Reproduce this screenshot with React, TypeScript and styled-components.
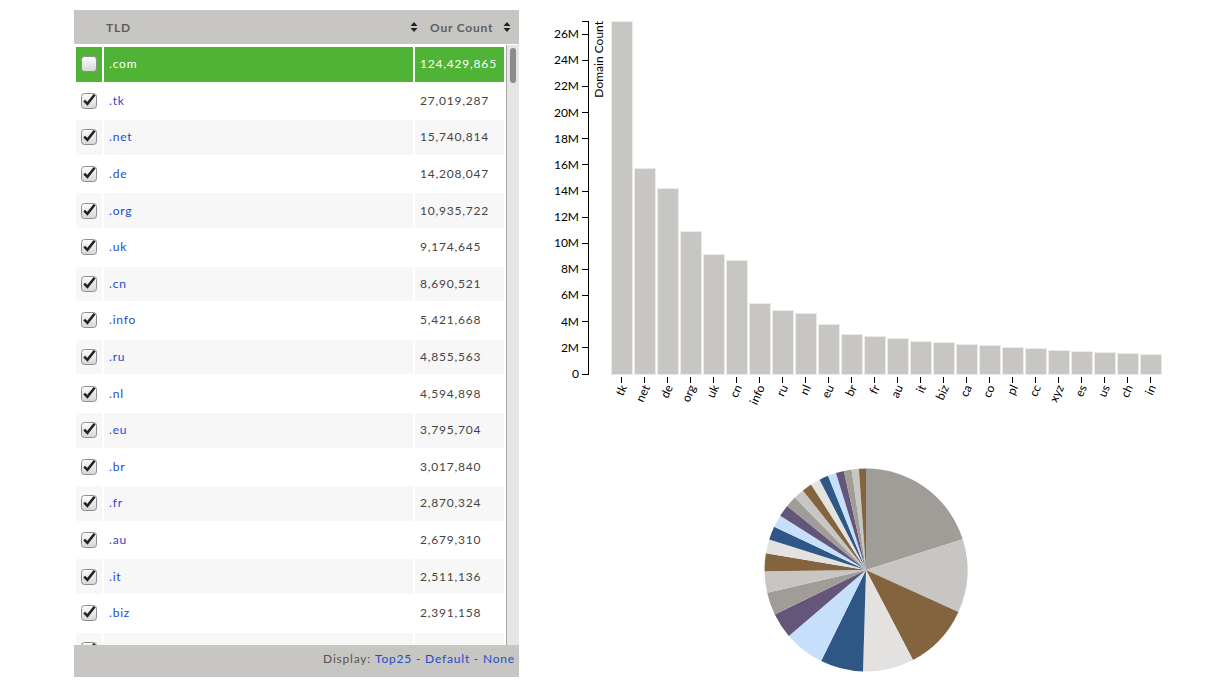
import React from 'react';
import styled, { createGlobalStyle } from 'styled-components';

const GlobalStyle = createGlobalStyle`
	html, body {
		margin: 0;
		padding: 0;
		background: #ffffff;
	}
	body {
		font-family: Lato, "Open Sans", "Liberation Sans", sans-serif;
	}
`;

interface Tld {
	name: string;
	count: number;
	checked: boolean;
}

const raw: [string, number][] = [
	['com', 124429865],
	['tk', 27019287],
	['net', 15740814],
	['de', 14208047],
	['org', 10935722],
	['uk', 9174645],
	['cn', 8690521],
	['info', 5421668],
	['ru', 4855563],
	['nl', 4594898],
	['eu', 3795704],
	['br', 3017840],
	['fr', 2870324],
	['au', 2679310],
	['it', 2511136],
	['biz', 2391158],
	['ca', 2270512],
	['co', 2143879],
	['pl', 2051266],
	['cc', 1962450],
	['xyz', 1768932],
	['es', 1717045],
	['us', 1659873],
	['ch', 1558204],
	['in', 1502196],
];

const tlds: Tld[] = raw.map(([name, count], i) => ({ name, count, checked: i > 0 }));
const charted = tlds.filter(t => t.checked);

// rows that fit in the list viewport (the last one is cut by the footer)
const VISIBLE_ROWS = 17;

const pieColors = ['#a09d98', '#c8c6c2', '#83643f', '#e3e2e0', '#2e5786', '#c6e0fb', '#64557a'];

const Page = styled.div`
	display: flex;
	align-items: flex-start;
	padding: 10px 0 0 74px;
`;

const Panel = styled.div`
	width: 445px;
	height: 667px;
	display: flex;
	flex-direction: column;
	font-size: 12px;
	letter-spacing: 0.8px;
	color: #444;
	flex-shrink: 0;
`;

const HeaderBar = styled.div`
	height: 34px;
	flex-shrink: 0;
	background: #c8c6c2;
	display: grid;
	grid-template-columns: 30px 316px 1fr;
	align-items: center;
	font-weight: bold;
	color: #5e5e5e;
`;

const HeaderCell = styled.div<{ $padLeft: number; $padRight: number }>`
	display: flex;
	align-items: center;
	justify-content: space-between;
	padding-left: ${p => p.$padLeft}px;
	padding-right: ${p => p.$padRight}px;
`;

const Body = styled.div`
	height: 600px;
	flex-shrink: 0;
	display: flex;
	margin-top: 1px;
`;

const Viewport = styled.div`
	flex: 1;
	overflow: hidden;
	padding: 2px 2px 0 2px;
`;

const Row = styled.div`
	display: grid;
	grid-template-columns: 26px 309px 89px;
	column-gap: 2px;
	height: 34.6px;
	margin-bottom: 2px;
`;

type Tone = 'plain' | 'striped' | 'active';

const toneBg: Record<Tone, string> = {
	plain: '#ffffff',
	striped: '#f7f7f7',
	active: '#4fb336',
};

const Cell = styled.div<{ $tone: Tone; $center?: boolean }>`
	background: ${p => toneBg[p.$tone]};
	display: flex;
	align-items: center;
	justify-content: ${p => p.$center ? 'center' : 'flex-start'};
	padding-left: ${p => p.$center ? 0 : 5}px;
	padding-bottom: ${p => p.$center ? 0 : 1}px;
	color: ${p => p.$tone === 'active' ? '#ffffff' : '#444'};
`;

const TldLink = styled.a<{ $active: boolean }>`
	color: ${p => p.$active ? '#ffffff' : '#1c4bcc'};
	text-decoration: none;
`;

const ScrollTrack = styled.div`
	width: 12px;
	flex-shrink: 0;
	background: #e6e5e3;
	border-left: 1px solid #a9a9a9;
	padding-top: 3px;
	display: flex;
	justify-content: center;
`;

const ScrollThumb = styled.div`
	width: 6px;
	height: 35px;
	border-radius: 3px;
	background: #8b8b8b;
	margin-left: -1px;
`;

const Footer = styled.div`
	height: 32px;
	flex-shrink: 0;
	box-sizing: border-box;
	background: #c8c6c2;
	display: flex;
	align-items: center;
	justify-content: flex-end;
	padding: 0 4px 5px 0;
	color: #555;
`;

const FooterLink = styled.a`
	color: #1c4bcc;
	text-decoration: none;
`;

const ChartColumn = styled.div`
	display: flex;
	flex-direction: column;
	margin-left: 21px;
`;

const ChartSvg = styled.svg`
	display: block;
	font-family: Lato, "Open Sans", "Liberation Sans", sans-serif;
	font-size: 12px;
`;

const Bar = styled.rect`
	fill: #c8c6c2;
	stroke: #ebeae8;
	stroke-width: 1px;
	shape-rendering: crispEdges;
`;

const AxisLine = styled.path`
	fill: none;
	stroke: #000;
	stroke-width: 1px;
	shape-rendering: crispEdges;
`;

const AxisText = styled.text`
	fill: #000;
`;

function SortIcon() {
	return (
		<svg width="8" height="12" viewBox="0 0 8 12">
			<path d="M0.5 5 L4 1 L7.5 5 Z M0.5 7 L4 11 L7.5 7 Z" fill="#222" />
		</svg>
	);
}

function CheckBox({ checked }: { checked: boolean }) {
	return (
		<svg width="16" height="16" viewBox="0 0 16 16" style={{ overflow: 'visible' }}>
			<defs>
				<linearGradient id="cbFill" x1="0" y1="0" x2="0" y2="1">
					<stop offset="0" stopColor="#fdfdfd" />
					<stop offset="1" stopColor="#d6d6d6" />
				</linearGradient>
			</defs>
			<rect x="0.5" y="0.5" width="15" height="15" rx="3" fill="url(#cbFill)" stroke="#8e8e8e" />
			{checked && (
				<path d="M3.2 7.6 L6.4 10.8 L13.6 1.8" fill="none" stroke="#222" strokeWidth="2.6" strokeLinejoin="miter" />
			)}
		</svg>
	);
}

function TldTable() {
	return (
		<Panel>
			<HeaderBar>
				<div />
				<HeaderCell $padLeft={2} $padRight={2}>TLD<SortIcon /></HeaderCell>
				<HeaderCell $padLeft={10} $padRight={8}>Our Count<SortIcon /></HeaderCell>
			</HeaderBar>
			<Body>
				<Viewport>
					{tlds.slice(0, VISIBLE_ROWS).map((t, i) => {
						const active = i === 0;
						const tone: Tone = active ? 'active' : i % 2 === 0 ? 'striped' : 'plain';
						const last = i === VISIBLE_ROWS - 1;
						return (
							<Row key={t.name}>
								<Cell $tone={tone} $center><CheckBox checked={t.checked} /></Cell>
								<Cell $tone={tone}>{!last && <TldLink href="#" $active={active}>.{t.name}</TldLink>}</Cell>
								<Cell $tone={tone}>{!last && t.count.toLocaleString('en-US')}</Cell>
							</Row>
						);
					})}
				</Viewport>
				<ScrollTrack><ScrollThumb /></ScrollTrack>
			</Body>
			<Footer>
				Display:&nbsp;<FooterLink href="#">Top25 - Default - None</FooterLink>
			</Footer>
		</Panel>
	);
}

function BarChart() {
	const max = charted[0].count;
	const top = 11;
	const bottom = 364;
	const axisX = 48;
	const y = (v: number) => bottom - (v / max) * (bottom - top);
	const ticks = Array.from({ length: 14 }, (_, i) => i * 2000000);

	return (
		<ChartSvg width={660} height={400}>
			{charted.map((d, i) => (
				<Bar key={d.name} x={71 + 23 * i} y={y(d.count)} width={21} height={bottom - y(d.count)} />
			))}
			<AxisLine d={`M${axisX - 6},${top}H${axisX}V${bottom}H${axisX - 6}`} />
			{ticks.map(v => (
				<g key={v} transform={`translate(${axisX},${y(v)})`}>
					<AxisLine d="M-6,0H0" />
					<AxisText x={-9} dy=".32em" textAnchor="end">{v === 0 ? '0' : `${v / 1000000}M`}</AxisText>
				</g>
			))}
			<AxisText transform={`translate(${axisX},${top}) rotate(-90)`} y={6} dy=".71em" textAnchor="end">Domain Count</AxisText>
			{charted.map((d, i) => {
				const tx = 71 + 23 * i + 10.5;
				return (
					<g key={d.name} transform={`translate(${tx},${bottom})`}>
						<AxisLine d="M0,3V9" />
						<AxisText transform="rotate(-65)" x={0} y={9} dx="-.8em" dy=".15em" textAnchor="end">{d.name}</AxisText>
					</g>
				);
			})}
		</ChartSvg>
	);
}

function PieChart() {
	const total = charted.reduce((s, d) => s + d.count, 0);
	const cx = 326;
	const cy = 160;
	const r = 101.5;
	let angle = 0;
	const slices = charted.map((d, i) => {
		const a0 = angle;
		const a1 = angle + (d.count / total) * Math.PI * 2;
		angle = a1;
		const x0 = cx + r * Math.sin(a0);
		const y0 = cy - r * Math.cos(a0);
		const x1 = cx + r * Math.sin(a1);
		const y1 = cy - r * Math.cos(a1);
		const large = a1 - a0 > Math.PI ? 1 : 0;
		return (
			<path
				key={d.name}
				d={`M${cx},${cy}L${x0},${y0}A${r},${r} 0 ${large} 1 ${x1},${y1}Z`}
				fill={pieColors[i % pieColors.length]}
			/>
		);
	});
	return <ChartSvg width={660} height={280}>{slices}</ChartSvg>;
}

export default function App() {
	return (
		<>
			<GlobalStyle />
			<Page>
				<TldTable />
				<ChartColumn>
					<BarChart />
					<PieChart />
				</ChartColumn>
			</Page>
		</>
	);
}
